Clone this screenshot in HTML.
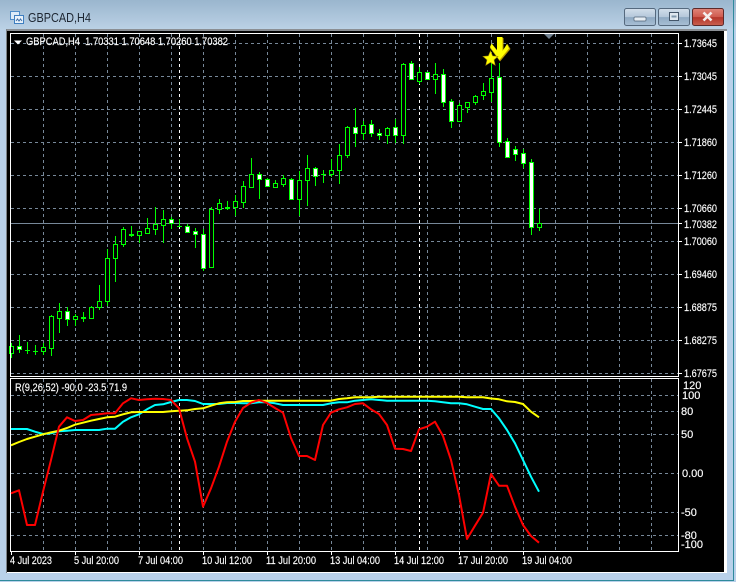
<!DOCTYPE html>
<html><head><meta charset="utf-8"><title>GBPCAD,H4</title>
<style>
html,body{margin:0;padding:0;width:736px;height:582px;overflow:hidden;background:#b9d1ea}
svg{display:block;position:absolute;left:0;top:0}
text{font-family:"Liberation Sans",sans-serif;font-size:11px;fill:#fff;stroke:#fff;stroke-width:.15px}
</style></head><body>
<svg width="736" height="582" viewBox="0 0 736 582" xmlns="http://www.w3.org/2000/svg">
<defs>
<linearGradient id="t" x1="0" y1="0" x2="0" y2="1"><stop offset="0" stop-color="#9ab6ce"/><stop offset="1" stop-color="#bcd2e6"/></linearGradient>
<linearGradient id="b" x1="0" y1="0" x2="0" y2="1"><stop offset="0" stop-color="#d3dfeb"/><stop offset=".5" stop-color="#b4c7da"/><stop offset=".52" stop-color="#8fa9c2"/><stop offset="1" stop-color="#a9c0d6"/></linearGradient>
<linearGradient id="r" x1="0" y1="0" x2="0" y2="1"><stop offset="0" stop-color="#e0857a"/><stop offset=".5" stop-color="#cf5a4e"/><stop offset=".52" stop-color="#b4352a"/><stop offset="1" stop-color="#c9604f"/></linearGradient>
</defs>
<rect width="736" height="582" fill="#b9d1ea"/>
<rect width="736" height="30" fill="url(#t)"/>
<path d="M733.5 0V580.5H0" fill="none" stroke="#2f8a9c"/>
<!-- title icon -->
<rect x="10.500" y="11.500" width="9" height="8" fill="#dcebf8" stroke="#4d8cc8"/>
<rect x="14.500" y="15.500" width="9" height="8" fill="#e8f2fb" stroke="#3f7fc0"/>
<path d="M16 21l1.500-2 1.500 2 1.500-2 1.500 2" fill="none" stroke="#3f6fa8"/>
<text x="28" y="22" textLength="63" lengthAdjust="spacingAndGlyphs" style="font-size:12.500px;fill:#1c2530;stroke:none">GBPCAD,H4</text>
<!-- buttons -->
<rect x="624.500" y="8.500" width="31" height="17" rx="2" fill="url(#b)" stroke="#55697e"/>
<rect x="634" y="17" width="12" height="4" rx="1" fill="#e6edf3" stroke="#4f6275" stroke-width=".7"/>
<rect x="658.500" y="8.500" width="31" height="17" rx="2" fill="url(#b)" stroke="#55697e"/>
<rect x="669.500" y="12.500" width="9" height="8" fill="#dfe8f0" stroke="#44566a"/><rect x="671.500" y="15.500" width="5" height="2" fill="#7f97ad"/>
<rect x="692.500" y="8.500" width="31" height="17" rx="2" fill="url(#r)" stroke="#5d2a2a"/>
<path d="M703.500 12.500l8 8M711.500 12.500l-8 8" stroke="#f4eeee" stroke-width="2.600" fill="none"/>
<!-- client -->
<rect x="6" y="29" width="721" height="544" fill="#fff"/>
<rect x="6" y="29" width="721" height="2" fill="#8b8f94"/>
<rect x="6" y="29" width="1" height="544" fill="#7c8288"/>
<rect x="7" y="31" width="717" height="541" fill="#000"/>
<!-- grid main -->
<g stroke="#778899" fill="none" stroke-dasharray="3 3">
<path d="M11 43.500H678M11 76.500H678M11 109.500H678M11 142.500H678M11 175.500H678M11 208.500H678M11 241.500H678M11 274.500H678M11 307.500H678M11 340.500H678M11 373.500H678"/>
<path d="M43.500 34V376M75.500 34V376M107.500 34V376M139.500 34V376M171.500 34V376M203.500 34V376M235.500 34V376M267.500 34V376M299.500 34V376M331.500 34V376M363.500 34V376M395.500 34V376M427.500 34V376M459.500 34V376M491.500 34V376M523.500 34V376M555.500 34V376M587.500 34V376M619.500 34V376M651.500 34V376"/>
<path d="M11 395.500H678M11 411.500H678M11 434.500H678M11 473.500H678M11 512.500H678M11 535.500H678"/>
<path d="M43.500 379V551M75.500 379V551M107.500 379V551M139.500 379V551M171.500 379V551M203.500 379V551M235.500 379V551M267.500 379V551M299.500 379V551M331.500 379V551M363.500 379V551M395.500 379V551M427.500 379V551M459.500 379V551M491.500 379V551M523.500 379V551M555.500 379V551M587.500 379V551M619.500 379V551M651.500 379V551"/>
</g>
<path d="M179.500 34V376M419.500 34V376M179.500 379V551M419.500 379V551" stroke="#fff" stroke-dasharray="3 3" fill="none"/>
<!-- bid line -->
<path d="M11 223.500H678" stroke="#778899"/>
<!-- wicks -->
<path stroke="#0f0" fill="none" shape-rendering="crispEdges" d="M11.500 343V358M19.500 335V353M27.500 342V354M35.500 345V355M43.500 343V355M51.500 315V356M59.500 303V333M67.500 307V326M75.500 314V326M83.500 312V322M91.500 306V319M99.500 285V310M107.500 249V306M115.500 236V282M123.500 227V247M131.500 226V237M139.500 231V243M147.500 218V234M155.500 207V235M163.500 210V243M171.500 217V229M179.500 219V227M187.500 224V233M195.500 228V248M203.500 229V271M211.500 207V268M219.500 199V214M227.500 201V210M235.500 195V216M243.500 181V208M251.500 158V187M259.500 172V199M267.500 178V187M275.500 180V188M283.500 175V187M291.500 178V200M299.500 171V216M307.500 155V206M315.500 167V186M323.500 170V183M331.500 159V177M339.500 144V184M347.500 126V158M355.500 108V147M363.500 121V140M371.500 120V137M379.500 129V140M387.500 127V144M395.500 119V143M403.500 63V144M411.500 61V80M419.500 67V84M427.500 72V80M435.500 63V94M443.500 69V107M451.500 99V128M459.500 103V122M467.500 102V113M475.500 95V105M483.500 83V100M491.500 62V102M499.500 63V147M507.500 138V157M515.500 146V161M523.500 149V168M531.500 159V235M539.500 209V231"/>
<!-- doji -->
<path stroke="#0f0" fill="none" shape-rendering="crispEdges" d="M25 350.500h5M33 351.500h5M81 317.500h5M81 318.500h5M129 234.500h5M129 235.500h5M177 226.500h5M225 207.500h5M225 208.500h5M321 174.500h5"/>
<!-- bull bodies -->
<path stroke="#0f0" fill="#000" shape-rendering="crispEdges" d="M9.500 346.500h4v7h-4zM41.500 347.500h4v4h-4zM49.500 316.500h4v32h-4zM57.500 311.500h4v7h-4zM73.500 316.500h4v3h-4zM89.500 307.500h4v11h-4zM97.500 301.500h4v6h-4zM105.500 258.500h4v43h-4zM113.500 244.500h4v14h-4zM121.500 229.500h4v15h-4zM137.500 231.500h4v4h-4zM145.500 228.500h4v5h-4zM153.500 224.500h4v5h-4zM161.500 219.500h4v6h-4zM209.500 209.500h4v58h-4zM217.500 203.500h4v6h-4zM233.500 201.500h4v6h-4zM241.500 186.500h4v16h-4zM249.500 174.500h4v13h-4zM273.500 183.500h4v4h-4zM281.500 178.500h4v6h-4zM297.500 180.500h4v19h-4zM305.500 168.500h4v12h-4zM329.500 170.500h4v4h-4zM337.500 155.500h4v15h-4zM345.500 127.500h4v28h-4zM361.500 125.500h4v8h-4zM385.500 128.500h4v7h-4zM401.500 64.500h4v71h-4zM417.500 72.500h4v9h-4zM433.500 74.500h4v5h-4zM457.500 105.500h4v16h-4zM465.500 102.500h4v5h-4zM473.500 96.500h4v6h-4zM481.500 91.500h4v4h-4zM489.500 78.500h4v14h-4zM537.500 223.500h4v4h-4z"/>
<!-- bear bodies -->
<path stroke="#0f0" fill="#fff" shape-rendering="crispEdges" d="M17.500 346.500h4v3h-4zM65.500 311.500h4v8h-4zM169.500 219.500h4v4h-4zM185.500 226.500h4v6h-4zM193.500 231.500h4v3h-4zM201.500 234.500h4v34h-4zM257.500 174.500h4v5h-4zM265.500 179.500h4v7h-4zM289.500 179.500h4v20h-4zM313.500 168.500h4v8h-4zM353.500 127.500h4v6h-4zM369.500 124.500h4v9h-4zM377.500 133.500h4v2h-4zM393.500 127.500h4v8h-4zM409.500 63.500h4v16h-4zM425.500 72.500h4v7h-4zM441.500 74.500h4v28h-4zM449.500 101.500h4v20h-4zM497.500 77.500h4v65h-4zM505.500 141.500h4v16h-4zM513.500 149.500h4v5h-4zM521.500 153.500h4v10h-4zM529.500 162.500h4v65h-4z"/>
<!-- arrow + star -->
<path fill="#b89a00" d="M497 38h6.500v12l4-6 3 5-10.500 12.500L490 48l2-4 5 6z"/>
<path fill="#ff0" d="M497 37h5.500v14l4.500-7 2 4.500-9.500 11.500-9.500-13 1.500-3.500 5.500 7z"/>
<path fill="#ff0" stroke="#a88c00" stroke-width=".6" d="M490.500 51l2.100 4.900 5.400.5-4 3.500 1.200 5.300-4.700-2.800-4.700 2.800 1.200-5.300-4-3.500 5.400-.5z"/>
<!-- frames -->
<path d="M10.500 33.500H678.500V376.500H10.500Z M10.500 378.500H678.500V551.500H10.500Z" fill="none" stroke="#fff"/>
<path d="M544 34h10l-5 5z" fill="#708090"/>
<path d="M14 40.500h8l-4 4z" fill="#fff"/>
<!-- indicator lines -->
<g fill="none" stroke-width="2" stroke-linejoin="round">
<polyline stroke="#0ff" points="11,429 19,429 27,429 35,431.700 43,434 51,433.300 59,431.300 67,430.700 75,430 83,430 91,430 99,430 107,428.700 115,428.700 123,421.700 131,417.300 139,414.300 147,409.300 155,405 163,404.300 171,402 179,400 187,400 195,401 203,404 211,404 219,404 227,403 235,403 243,403.300 251,403.300 259,402.300 267,402.300 275,403.300 283,405 291,405 299,405 307,405 315,405 323,405 331,403.300 339,402.300 347,402.300 355,400.700 363,400 371,399.300 379,400 387,400.700 395,400.700 403,400.700 411,400.700 419,400.700 427,400.700 435,401.300 443,402.300 451,403.300 459,403.300 467,404.300 475,406.700 483,409 491,409 499,418.300 507,430 515,443.300 523,460 531,476.700 539,491.700"/>
<polyline stroke="#ff0" points="11,445.300 19,442 27,439 35,436.700 43,434.300 51,432.300 59,430.700 67,428 75,424.700 83,422.700 91,420.700 99,419 107,417.300 115,416.700 123,414.300 131,412.300 139,412 147,412 155,412 163,412 171,411.300 179,410.700 187,410.300 195,409 203,408.300 211,405.700 219,403.300 227,402.300 235,402 243,401 251,401 259,400.700 267,400.700 275,400.700 283,400.700 291,400.700 299,400.700 307,400.700 315,400.700 323,400.700 331,400.700 339,399 347,398.300 355,397.300 363,397.300 371,397.300 379,396.700 387,396.700 395,396.700 403,396.700 411,396.700 419,396.700 427,396.700 435,396.700 443,396.700 451,396.700 459,396.700 467,397.300 475,397.300 483,397.300 491,398.500 499,399.300 507,401.300 515,402 523,404 531,411.700 539,417.300"/>
<polyline stroke="#f00" points="11,493.300 19,490.300 27,525 35,525 43,491.700 51,460 59,426.700 67,417.300 75,421 83,420 91,415 99,414.300 107,413.300 115,413.300 123,403.300 131,398.300 139,400 147,399.300 155,398.700 163,399 171,400 179,408.300 187,438.300 195,461.700 203,506.700 211,488.300 219,466.700 227,441.700 235,421.700 243,408 251,402.700 259,400 267,403 275,408 283,412.700 291,438 299,456 307,456 315,460 323,425 331,412.700 339,409.300 347,407.300 355,404 363,403.300 371,409.300 379,414 387,425 395,448.700 403,449 411,451 419,429.300 427,426.700 435,421.700 443,436 451,460 459,495 467,539 475,525.700 483,512.700 491,474 499,485.700 507,485.700 515,506.700 523,525 531,536 539,542.700"/>
</g>
<!-- ticks -->
<path stroke="#fff" fill="none" d="M11.500 552v3M75.500 552v3M139.500 552v3M203.500 552v3M267.500 552v3M331.500 552v3M395.500 552v3M459.500 552v3M523.500 552v3M679 43.500h3M679 76.500h3M679 109.500h3M679 142.500h3M679 175.500h3M679 208.500h3M679 223.500h3M679 241.500h3M679 274.500h3M679 307.500h3M679 340.500h3M679 373.500h3"/>
<!-- legends -->
<text x="26" y="45" textLength="202" lengthAdjust="spacingAndGlyphs" xml:space="preserve">GBPCAD,H4  1.70331 1.70648 1.70260 1.70382</text>
<text x="15" y="391" textLength="112" lengthAdjust="spacingAndGlyphs">R(9,26,52) -90.0 -23.5 71.9</text>
<!-- price labels -->
<g>
<text x="684" y="47" textLength="33" lengthAdjust="spacingAndGlyphs">1.73645</text>
<text x="684" y="80" textLength="33" lengthAdjust="spacingAndGlyphs">1.73045</text>
<text x="684" y="113" textLength="33" lengthAdjust="spacingAndGlyphs">1.72445</text>
<text x="684" y="146" textLength="33" lengthAdjust="spacingAndGlyphs">1.71860</text>
<text x="684" y="179" textLength="33" lengthAdjust="spacingAndGlyphs">1.71260</text>
<text x="684" y="212" textLength="33" lengthAdjust="spacingAndGlyphs">1.70660</text>
<text x="684" y="228" textLength="33" lengthAdjust="spacingAndGlyphs">1.70382</text>
<text x="684" y="245" textLength="33" lengthAdjust="spacingAndGlyphs">1.70060</text>
<text x="684" y="278" textLength="33" lengthAdjust="spacingAndGlyphs">1.69460</text>
<text x="684" y="311" textLength="33" lengthAdjust="spacingAndGlyphs">1.68875</text>
<text x="684" y="344" textLength="33" lengthAdjust="spacingAndGlyphs">1.68275</text>
<text x="684" y="377" textLength="33" lengthAdjust="spacingAndGlyphs">1.67675</text>
<text x="683" y="389">120</text>
<text x="682" y="399">100</text>
<text x="681" y="415">80</text>
<text x="681" y="438">50</text>
<text x="682" y="477">0.00</text>
<text x="681" y="516">-50</text>
<text x="681" y="539">-80</text>
<text x="681" y="548">-100</text>
</g>
<!-- time labels -->
<g>
<text x="10" y="564" textLength="42" lengthAdjust="spacingAndGlyphs">4 Jul 2023</text>
<text x="74" y="564" textLength="45" lengthAdjust="spacingAndGlyphs">5 Jul 20:00</text>
<text x="138" y="564" textLength="45" lengthAdjust="spacingAndGlyphs">7 Jul 04:00</text>
<text x="202" y="564" textLength="50" lengthAdjust="spacingAndGlyphs">10 Jul 12:00</text>
<text x="266" y="564" textLength="50" lengthAdjust="spacingAndGlyphs">11 Jul 20:00</text>
<text x="330" y="564" textLength="50" lengthAdjust="spacingAndGlyphs">13 Jul 04:00</text>
<text x="394" y="564" textLength="50" lengthAdjust="spacingAndGlyphs">14 Jul 12:00</text>
<text x="458" y="564" textLength="50" lengthAdjust="spacingAndGlyphs">17 Jul 20:00</text>
<text x="522" y="564" textLength="50" lengthAdjust="spacingAndGlyphs">19 Jul 04:00</text>
</g>
</svg>
</body></html>
